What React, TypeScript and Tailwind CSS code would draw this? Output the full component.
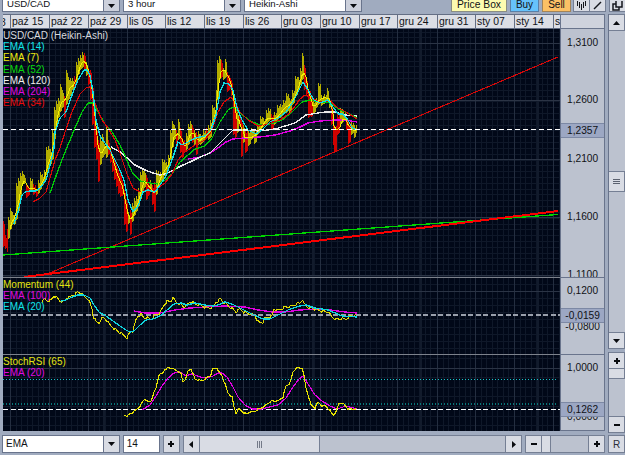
import type { ReactNode } from "react";

// x position of every week start, relative to the chart's left edge
const weekLines = [7, 46, 85, 124, 162, 201, 240, 278, 317, 356, 394, 434, 472, 511, 550];
const weekLabels = [
  "paź 15",
  "paź 22",
  "paź 29",
  "lis 05",
  "lis 12",
  "lis 19",
  "lis 26",
  "gru 03",
  "gru 10",
  "gru 17",
  "gru 24",
  "gru 31",
  "sty 07",
  "sty 14",
  "s",
];

const legend = [
  { text: "USD/CAD (Heikin-Ashi)", color: "text-[#d8dade]" },
  { text: "EMA (14)", color: "text-[#10e4ea]" },
  { text: "EMA (7)", color: "text-[#eeee10]" },
  { text: "EMA (52)", color: "text-[#08d80c]" },
  { text: "EMA (120)", color: "text-[#f0f0f0]" },
  { text: "EMA (204)", color: "text-[#e008e0]" },
  { text: "EMA (34)", color: "text-[#e80c0c]" },
];

// [x, high, low, 1 = rising / 0 = falling]
const bars = [
  [3, 221, 247, 0], [5, 235, 249, 0], [7, 229, 252, 0], [8, 217, 239, 1], [10, 208, 230, 1],
  [12, 212, 225, 1], [14, 215, 225, 1], [16, 183, 220, 1], [18, 178, 212, 1], [20, 173, 198, 1],
  [22, 171, 185, 1], [24, 175, 184, 1], [26, 184, 198, 0], [28, 186, 196, 0], [30, 178, 192, 1],
  [33, 184, 195, 0], [36, 189, 197, 0], [38, 180, 194, 1], [40, 172, 190, 1], [42, 174, 186, 1],
  [44, 170, 183, 1], [46, 147, 175, 1], [48, 146, 170, 1], [50, 149, 165, 1], [52, 130, 160, 1],
  [54, 107, 140, 1], [56, 101, 128, 1], [58, 98, 118, 1], [60, 84, 112, 1], [62, 90, 108, 1],
  [64, 96, 118, 0], [66, 70, 105, 1], [68, 77, 100, 1], [70, 78, 96, 1], [72, 78, 90, 1],
  [74, 76, 88, 0], [76, 62, 84, 1], [78, 58, 75, 1], [80, 55, 70, 1], [82, 52, 68, 1],
  [84, 53, 70, 0], [86, 62, 76, 1], [88, 68, 85, 0], [90, 70, 100, 0], [92, 85, 125, 0],
  [94, 110, 148, 0], [96, 128, 160, 0], [98, 140, 182, 0], [100, 138, 165, 1], [102, 134, 158, 1],
  [104, 144, 155, 1], [106, 127, 158, 1], [108, 140, 155, 0], [110, 148, 163, 0], [112, 155, 172, 0],
  [114, 158, 180, 0], [116, 165, 187, 0], [118, 170, 194, 0], [120, 173, 197, 0], [122, 180, 196, 0],
  [124, 190, 225, 0], [126, 200, 232, 0], [128, 212, 224, 1], [130, 210, 235, 0], [132, 203, 222, 1],
  [134, 198, 216, 1], [136, 196, 212, 1], [138, 188, 207, 1], [140, 172, 200, 1], [142, 168, 192, 1],
  [144, 170, 188, 1], [146, 175, 200, 0], [148, 182, 196, 0], [150, 180, 192, 1], [152, 185, 205, 0],
  [154, 182, 212, 0], [156, 170, 195, 1], [158, 171, 186, 1], [160, 172, 184, 1], [162, 159, 180, 1],
  [164, 160, 176, 1], [166, 162, 175, 1], [168, 155, 168, 1], [170, 130, 160, 1], [172, 121, 148, 1],
  [174, 125, 140, 1], [176, 130, 148, 0], [178, 119, 140, 1], [180, 128, 153, 0], [182, 138, 158, 0],
  [184, 140, 153, 0], [186, 133, 150, 1], [188, 124, 145, 1], [190, 121, 140, 1], [192, 125, 143, 0],
  [194, 130, 146, 1], [196, 132, 155, 0], [198, 131, 145, 1], [200, 134, 145, 1], [203, 130, 142, 1],
  [206, 128, 138, 0], [208, 125, 140, 1], [210, 120, 138, 1], [212, 105, 125, 1], [214, 107, 120, 1],
  [216, 90, 115, 1], [217, 60, 100, 1], [219, 56, 80, 1], [221, 60, 78, 0], [223, 68, 80, 1],
  [225, 59, 78, 1], [227, 72, 92, 0], [229, 75, 90, 0], [231, 80, 96, 0], [233, 95, 135, 0],
  [235, 100, 138, 0], [237, 112, 133, 1], [239, 114, 126, 0], [241, 120, 157, 0], [243, 125, 143, 1],
  [245, 130, 153, 0], [248, 130, 146, 1], [251, 128, 140, 1], [254, 130, 144, 1], [257, 124, 135, 1],
  [260, 116, 130, 1], [263, 118, 127, 1], [266, 110, 124, 1], [268, 108, 122, 1], [271, 114, 130, 0],
  [274, 112, 125, 1], [277, 105, 120, 1], [280, 104, 118, 1], [283, 100, 115, 1], [286, 93, 113, 1],
  [289, 98, 115, 1], [292, 90, 105, 1], [295, 76, 97, 1], [298, 77, 90, 1], [300, 68, 85, 1],
  [302, 53, 80, 1], [304, 65, 90, 0], [306, 78, 95, 0], [308, 90, 118, 0], [311, 95, 117, 0],
  [313, 100, 114, 1], [316, 98, 108, 1], [318, 83, 105, 1], [321, 95, 106, 1], [324, 94, 104, 1],
  [327, 88, 102, 1], [329, 98, 108, 1], [331, 100, 125, 0], [333, 110, 145, 0], [334, 125, 153, 0],
  [337, 114, 135, 0], [340, 108, 125, 1], [343, 112, 122, 1], [346, 117, 130, 0], [348, 122, 144, 0],
  [351, 122, 135, 1], [354, 125, 138, 1], [356, 125, 133, 1],
];

const ema14 =
  "14,224 18,212 22,195 25,192 30,191 36,191 40,188 46,180 50,165 54,148 55,132 60,118 66,112 72,95 78,80 84,70 87,70 90,75 93,92 96,120 100,136 105,143 110,150 115,160 120,170 124,180 128,200 133,212 138,206 143,192 148,190 155,192 160,185 166,176 172,160 178,142 182,145 188,142 195,138 205,136 211,130 216,115 220,92 224,83 229,84 233,90 237,108 242,120 248,130 256,134 262,130 270,122 278,118 286,112 294,100 300,88 303,82 308,90 314,100 320,103 328,100 333,107 338,114 343,114 348,120 352,128 357,130";
const ema34 =
  "33,202 40,198 46,192 50,178 55,160 60,148 65,132 72,112 80,94 86,88 90,87 95,103 102,120 108,128 115,140 120,153 127,174 133,188 140,192 146,190 155,190 165,183 172,174 178,160 185,152 195,145 205,140 211,132 218,112 224,102 231,97 235,103 240,112 248,120 258,126 268,124 280,120 290,113 300,99 305,95 312,98 320,102 330,101 338,108 346,112 357,119";
const ema52 =
  "50,193 56,176 62,160 68,145 75,128 82,112 88,103 93,103 98,112 105,124 112,132 120,145 126,158 132,172 140,181 150,183 158,184 165,180 172,174 180,162 188,155 195,149 205,146 212,138 220,122 228,110 233,107 240,113 250,121 260,125 270,124 282,120 292,112 302,102 310,100 320,102 330,103 340,110 348,113 357,118";
const ema120 =
  "111,147 120,152 126,157 135,165 145,170 153,173 160,175 168,173 175,169 183,165 190,162 198,158 210,153 218,145 225,138 233,130 245,130 260,131 275,129 285,126 295,123 306,115 318,113 325,112 335,112 345,115 357,116";
const ema204 =
  "188,159 200,157 210,153 218,148 226,142 233,139 245,138 260,137 275,135 290,131 300,127 308,123 320,121 335,120 345,120 357,122";

const momentum =
  "42,302 45,299 48,301 51,300 54,296 57,298 60,301 64,301 67,298 70,297 75,294 78,292 82,294 85,297 88,299 90,303 92,309 93,315 96,322 99,323 101,319 104,318 107,321 110,325 115,329 120,333 125,336 127,338 130,332 133,331 136,320 138,316 141,314 144,318 147,318 151,319 155,315 160,313 164,305 167,301 170,302 173,298 176,302 180,304 184,307 187,305 191,301 195,304 200,305 205,307 210,308 213,308 216,302 219,300 221,299 223,302 226,304 230,307 233,309 236,312 240,309 244,312 250,314 255,315 257,320 260,323 263,322 265,318 269,317 272,316 274,309 278,311 284,307 290,307 296,304 300,303 302,300 304,304 308,307 314,309 322,311 328,312 332,317 336,319 341,319 346,319 350,316 357,316";
const momentum20 =
  "61,301 66,300 72,297 78,295 84,295 90,298 94,305 99,312 106,316 113,321 120,326 126,330 130,332 134,331 140,325 146,320 153,319 160,316 167,310 174,304 181,303 187,305 195,303 205,305 213,306 218,305 225,302 232,304 240,308 248,312 256,316 263,319 270,319 280,314 290,309 300,306 306,305 315,308 328,310 335,313 342,316 357,317";
const momentum100 =
  "134,311 145,313 160,313 175,310 190,308 205,307 225,306 245,307 258,310 272,312 285,312 300,310 315,309 330,310 345,312 357,313";

const stoch =
  "124,415 127,416 130,414 135,411 140,406 143,401 145,399 148,402 151,401 153,395 156,388 159,375 162,374 165,369 168,368 172,368 175,370 178,371 181,374 183,382 186,378 188,371 191,369 193,374 195,379 198,380 202,381 206,378 210,376 213,369 217,368 219,372 222,376 225,384 228,393 232,397 234,407 236,413 239,409 243,412 246,414 250,412 254,412 258,409 264,407 268,403 272,401 278,401 283,397 286,386 290,383 293,372 296,368 302,368 304,376 306,388 309,398 311,405 315,408 318,402 322,406 326,406 330,411 333,415 336,412 339,403 344,404 348,409 352,409 357,410";
const stoch20 =
  "142,410 150,405 156,396 162,386 168,378 174,373 180,372 186,376 191,374 195,375 200,377 207,378 213,376 218,373 222,373 227,377 233,387 238,397 245,405 252,409 262,409 270,407 278,405 286,398 293,387 299,379 303,376 308,384 315,395 322,401 330,406 337,409 346,406 357,409";

// small repeatable wobble so indicator lines look like tick data
const wobble = (i: number) => ((i * 7919 + 31) % 13) / 6 - 1;

const jitter = (points: string, amount: number) => {
  const pts = points.split(" ").map((p) => p.split(",").map(Number));
  const out: string[] = [];
  for (let i = 0; i < pts.length - 1; i++) {
    const [x0, y0] = pts[i];
    const [x1, y1] = pts[i + 1];
    for (let x = x0; x < x1; x++) {
      const y = y0 + ((y1 - y0) * (x - x0)) / (x1 - x0);
      out.push(`${x},${(y + wobble(x) * amount).toFixed(1)}`);
    }
  }
  return out.join(" ");
};

const ema7 = bars
  .slice(4)
  .map(([x], i) => {
    const group = bars.slice(i + 2, i + 5);
    const mid = group.reduce((sum, b) => sum + (b[1] + b[2]) / 2, 0) / group.length;
    return `${x},${mid.toFixed(1)}`;
  })
  .join(" ");

const Grid = ({ top, bottom, major, minor }: { top: number; bottom: number; major: number[]; minor: number[] }) => (
  <g>
    {weekLines.map((x, i) =>
      [1, 2, 3, 4, 5, 6].map((d) => (
        <rect key={`${i}-${d}`} x={Math.round(x + 3 + d * 5.54)} y={top} width={1} height={bottom - top} fill="#0f1829" />
      )),
    )}
    {minor.map((y) => (
      <rect key={y} x={3} y={y} width={557} height={1} fill="#0f1829" />
    ))}
    {[103, 312, 420, 537].map((x) => (
      <rect key={x} x={x} y={top} width={2} height={bottom - top} fill="#121b2c" />
    ))}
    {weekLines.map((x) => (
      <rect key={x} x={x + 3} y={top} width={1} height={bottom - top} fill="#242e40" />
    ))}
    {major.map((y) => (
      <rect key={y} x={3} y={y} width={557} height={1} fill="#2b3445" />
    ))}
  </g>
);

const range = (from: number, to: number, step: number) => {
  const out: number[] = [];
  for (let v = from; v < to; v += step) out.push(Math.round(v));
  return out;
};

const PriceChart = () => (
  <svg className="block" width={557} height={248} viewBox="3 29 557 248" fill="none" shapeRendering="crispEdges">
    <Grid top={29} bottom={277} major={[43, 100, 159, 217, 275]} minor={range(31.5, 277, 5.82)} />
    {bars.map(([x, high, low, up], i) => {
      const next = bars[i + 1];
      const gap = next ? next[0] - x : 1;
      return (
        <g key={i} fill={up ? "#b4ae00" : "#d00200"}>
          <rect x={x} y={high} width={1} height={low - high} />
          {gap > 1 && <rect x={x + 1} y={high + 3} width={1} height={Math.max(low - high - 4, 3)} />}
          {gap > 2 && <rect x={x + 2} y={high + 1} width={1} height={Math.max(low - high - 3, 3)} />}
        </g>
      );
    })}
    <polyline points={ema204} stroke="#e000e0" strokeWidth={1.4} />
    <polyline points={ema120} stroke="#e8e8e8" strokeWidth={1.4} />
    <polyline points={ema52} stroke="#00c808" strokeWidth={1.3} />
    <polyline points={ema34} stroke="#d80808" strokeWidth={1.2} />
    <polyline points={ema7} stroke="#f4f000" strokeWidth={1} />
    <polyline points={ema14} stroke="#10dce4" strokeWidth={1.3} />
    <path d="M45 275 558 57" stroke="#d60808" strokeWidth={1.1} />
    <path d="M3 255 558 214.5" stroke="#00d400" strokeWidth={1.3} />
    <path d="M24 277 558 211" stroke="#fa0000" strokeWidth={2} />
    <path d="M3 129.5H560" stroke="#fff" strokeDasharray="5 3" />
  </svg>
);

const MomentumChart = () => (
  <svg className="block" width={557} height={76} viewBox="3 278 557 76" fill="none" shapeRendering="crispEdges">
    <Grid top={278} bottom={354} major={[291]} minor={[284, 298, 305, 312, 319, 327, 334, 341, 348]} />
    <path d="M3 315H560" stroke="#9aa0ac" strokeWidth={2} strokeDasharray="5 2.5" />
    <polyline points={momentum100} stroke="#e000e0" strokeWidth={1.4} />
    <polyline points={jitter(momentum, 1.3)} stroke="#e0dc00" strokeWidth={1} />
    <polyline points={momentum20} stroke="#10d4dc" strokeWidth={1.3} />
  </svg>
);

const StochChart = () => (
  <svg className="block" width={557} height={76} viewBox="3 355 557 76" fill="none" shapeRendering="crispEdges">
    <Grid top={355} bottom={431} major={[368]} minor={[358, 377, 387, 396, 406, 416, 425]} />
    <path d="M3 379.5H558" stroke="#18c4c8" strokeDasharray="1 2" />
    <path d="M3 404H558" stroke="#087478" strokeWidth={2} strokeDasharray="1 2" />
    <path d="M3 409.5H560" stroke="#fff" strokeDasharray="5 2.5" />
    <polyline points={stoch20} stroke="#e000e0" strokeWidth={1.2} />
    <polyline points={jitter(stoch, 0.7)} stroke="#e8e400" strokeWidth={1.1} />
  </svg>
);

const Arrow = ({ dir }: { dir: "up" | "down" | "left" | "right" }) => {
  const d = {
    up: "M0 4 3.5 0 7 4Z",
    down: "M0 0H7L3.5 4Z",
    left: "M4 0V7L0 3.5Z",
    right: "M0 0V7L4 3.5Z",
  }[dir];
  const tall = dir === "left" || dir === "right";
  return (
    <svg width={tall ? 4 : 7} height={tall ? 7 : 4} fill="#0a0c10">
      <path d={d} />
    </svg>
  );
};

const Sign = ({ plus = false }: { plus?: boolean }) => (
  <svg width={6} height={6} fill="#0a0c10">
    <path d="M0 2H6V4H0Z" />
    {plus && <path d="M2 0H4V6H2Z" />}
  </svg>
);

const Key = ({ className, children }: { className: string; children?: ReactNode }) => (
  <div className={`flex shrink-0 items-center justify-center border border-[#757f94] bg-[#d9dce4] ${className}`}>
    {children}
  </div>
);

const TopSelect = ({ text, className }: { text: string; className: string }) => (
  <div className={`flex h-[12px] w-[118px] shrink-0 border border-t-0 border-[#69748c] bg-white ${className}`}>
    <span className="-mt-[2px] grow pl-[4px] text-[9.6px] leading-[12px]">{text}</span>
    <div className="flex w-[16px] items-center justify-center border-l border-[#69748c] bg-[#cdd1dc] pt-[1px]">
      <Arrow dir="down" />
    </div>
  </div>
);

const Marker = ({ className, children }: { className: string; children: string }) => (
  <div className={`absolute left-0 h-[15px] w-full border-y border-[#7c88a4] bg-[#9ca7c3] text-center leading-[14px] ${className}`}>
    {children}
  </div>
);

const AxisLabel = ({ className, children }: { className: string; children: string }) => (
  <span className={`absolute left-0 w-full text-center leading-[12px] ${className}`}>{children}</span>
);

const Toolbar = () => (
  <div className="flex h-[14px] items-start overflow-hidden pl-[2px]">
    <TopSelect text="USD/CAD" className="mr-[3px]" />
    <TopSelect text="3 hour" className="mr-[3px]" />
    <TopSelect text="Heikin-Ashi" className="mr-[89px]" />
    <div className="mr-[3px] h-[12px] w-[56px] shrink-0 border border-t-0 border-[#8a8d84] bg-[#fdfbb0] text-center text-[10.3px] leading-[9px]">
      Price Box
    </div>
    <div className="mr-[3px] h-[12px] w-[29px] shrink-0 border border-t-0 border-[#5a7fa6] bg-[#66c2fb] text-center leading-[9px]">
      Buy
    </div>
    <div className="mr-[2px] h-[12px] w-[29px] shrink-0 border border-t-0 border-[#a38458] bg-[#fcc065] text-center leading-[9px]">
      Sell
    </div>
    <Key className="h-[12px] w-[17px] border-t-0">
      <svg width={11} height={10} stroke="#14161c" shapeRendering="crispEdges">
        <path d="M1.5 0V5M3.5 1V7M5.5 3V9M7.5 1V7M9.5 0V5" />
      </svg>
    </Key>
    <Key className="mr-[3px] h-[12px] w-[16px] border-t-0 border-l-0">
      <svg width={9} height={9} stroke="#14161c" strokeWidth={1.4}>
        <path d="M1 8 8 1" />
      </svg>
    </Key>
    <Key className="h-[12px] w-[17px] border-t-0">
      <svg width={11} height={10} fill="none" stroke="#14161c" strokeWidth={1.5}>
        <path d="M4 0V6H10V0M4 3H1V9H7V6" />
      </svg>
    </Key>
  </div>
);

const DateHeader = () => (
  <div className="flex h-[15px] border-y border-[#646e84] bg-[#dcdee5] text-[10.4px]">
    <div className="w-[8px] shrink-0 overflow-hidden border-r border-[#646e84]">
      <span className="-ml-[3px] leading-[14px]">8</span>
    </div>
    {weekLabels.map((label, i) => (
      <div
        key={label}
        style={{ width: (weekLines[i + 1] ?? 557) - weekLines[i] - (i === 14 ? 1 : 0) }}
        className={`shrink-0 overflow-hidden whitespace-nowrap pl-[1px] leading-[14px] ${i < 14 ? "border-r border-[#646e84]" : ""}`}
      >
        {label}
      </div>
    ))}
  </div>
);

const Axis = () => (
  <div className="flex w-[46px] flex-col border-r border-l border-[#69748c] bg-[#bcc2cf] text-[10.2px]">
    <div className="h-[15px] border-y border-[#69748c] bg-[#cfd3dd]" />
    <div className="relative h-[249px] overflow-hidden border-b border-[#69748c]">
      <AxisLabel className="top-[8px]">1,3100</AxisLabel>
      <AxisLabel className="top-[65px]">1,2600</AxisLabel>
      <AxisLabel className="top-[124px]">1,2100</AxisLabel>
      <AxisLabel className="top-[182px]">1,1600</AxisLabel>
      <AxisLabel className="top-[240px]">1,1100</AxisLabel>
      <Marker className="top-[94px]">1,2357</Marker>
    </div>
    <div className="relative h-[77px] overflow-hidden border-b border-[#69748c]">
      <AxisLabel className="top-[7px]">0,1200</AxisLabel>
      <AxisLabel className="top-[43px]">-0,0800</AxisLabel>
      <Marker className="top-[30px]">-0,0159</Marker>
    </div>
    <div className="relative h-[76px] overflow-hidden border-b border-[#69748c]">
      <AxisLabel className="top-[7px]">1,0000</AxisLabel>
      <AxisLabel className="top-[56px]">0,0000</AxisLabel>
      <Marker className="top-[47px]">0,1262</Marker>
    </div>
  </div>
);

const ChartArea = () => (
  <div className="w-[557px] bg-[#010818]">
    <DateHeader />
    <div className="relative">
      <PriceChart />
      <div className="absolute top-px left-0 flex flex-col">
        {legend.map(({ text, color }) => (
          <span key={text} className={`h-[11.2px] leading-[12px] ${color}`}>
            {text}
          </span>
        ))}
      </div>
    </div>
    <div className="h-px bg-[#7d828c]" />
    <div className="relative">
      <MomentumChart />
      <div className="absolute top-px left-0 flex flex-col">
        <span className="h-[11px] leading-[12px] text-[#e4e410]">Momentum (44)</span>
        <span className="h-[11px] leading-[12px] text-[#e008e0]">EMA (100)</span>
        <span className="h-[11px] leading-[12px] text-[#10e4ea]">EMA (20)</span>
      </div>
    </div>
    <div className="h-px bg-[#7d828c]" />
    <div className="relative">
      <StochChart />
      <div className="absolute top-px left-0 flex flex-col">
        <span className="h-[11px] leading-[12px] text-[#e4e410]">StochRSI (65)</span>
        <span className="h-[11px] leading-[12px] text-[#e008e0]">EMA (20)</span>
      </div>
    </div>
  </div>
);

const SideBars = () => (
  <div className="ml-[3px] flex w-[17px] flex-col">
    <div className="flex h-[335px] shrink-0 flex-col border-l border-[#69748c] bg-[#bcc2cf]">
      <Key className="h-[17px] border-l-0">
        <Arrow dir="up" />
      </Key>
      <div className="h-[140px]" />
      <Key className="h-[21px] flex-col gap-px border-l-0">
        <div className="h-px w-[7px] bg-[#5c6270]" />
        <div className="h-px w-[7px] bg-[#5c6270]" />
        <div className="h-px w-[7px] bg-[#5c6270]" />
      </Key>
      <div className="grow" />
      <Key className="h-[17px] border-l-0">
        <Arrow dir="down" />
      </Key>
    </div>
    <div className="mt-[3px] flex h-[81px] shrink-0 flex-col border-l border-[#69748c] bg-[#bcc2cf]">
      <Key className="h-[17px] border-l-0">
        <Sign plus />
      </Key>
      <Key className="-mt-px h-[11px] border-l-0" />
      <div className="grow" />
      <Key className="h-[17px] border-l-0">
        <Sign />
      </Key>
    </div>
  </div>
);

const BottomBar = () => (
  <div className="mt-[4px] flex h-[18px] pl-[2px]">
    <div className="mr-[3px] flex w-[118px] border border-[#69748c] bg-white">
      <span className="grow pl-[3px] leading-[16px]">EMA</span>
      <div className="flex w-[16px] items-center justify-center border-l border-[#69748c] bg-[#d9dce4]">
        <Arrow dir="down" />
      </div>
    </div>
    <div className="mr-[3px] w-[37px] border border-[#69748c] bg-white pl-[3px] leading-[16px]">14</div>
    <Key className="mr-[3px] w-[17px]">
      <Sign plus />
    </Key>
    <div className="mr-[3px] flex w-[340px] bg-[#bcc2cf]">
      <Key className="w-[17px]">
        <Arrow dir="left" />
      </Key>
      <Key className="-ml-px w-[121px] gap-px">
        <div className="h-[7px] w-px bg-[#747a88]" />
        <div className="h-[7px] w-px bg-[#747a88]" />
        <div className="h-[7px] w-px bg-[#747a88]" />
      </Key>
      <div className="grow border-y border-[#757f94]" />
      <Key className="w-[17px]">
        <Arrow dir="right" />
      </Key>
    </div>
    <div className="mr-[3px] flex w-[80px] bg-[#bcc2cf]">
      <Key className="w-[17px]">
        <Sign />
      </Key>
      <Key className="-ml-px w-[10px]" />
      <div className="grow border-y border-[#757f94]" />
      <Key className="w-[17px]">
        <Sign plus />
      </Key>
    </div>
    <Key className="w-[17px] text-[#2a2e38]">R</Key>
  </div>
);

const App = () => (
  <div className="h-[455px] w-[625px] overflow-hidden bg-[#a0abbf] font-['Liberation_Sans',Arial,sans-serif] text-[10px] text-[#101216]">
    <Toolbar />
    <div className="flex h-[417px] pl-[3px]">
      <ChartArea />
      <Axis />
      <SideBars />
    </div>
    <BottomBar />
  </div>
);

export default App;
